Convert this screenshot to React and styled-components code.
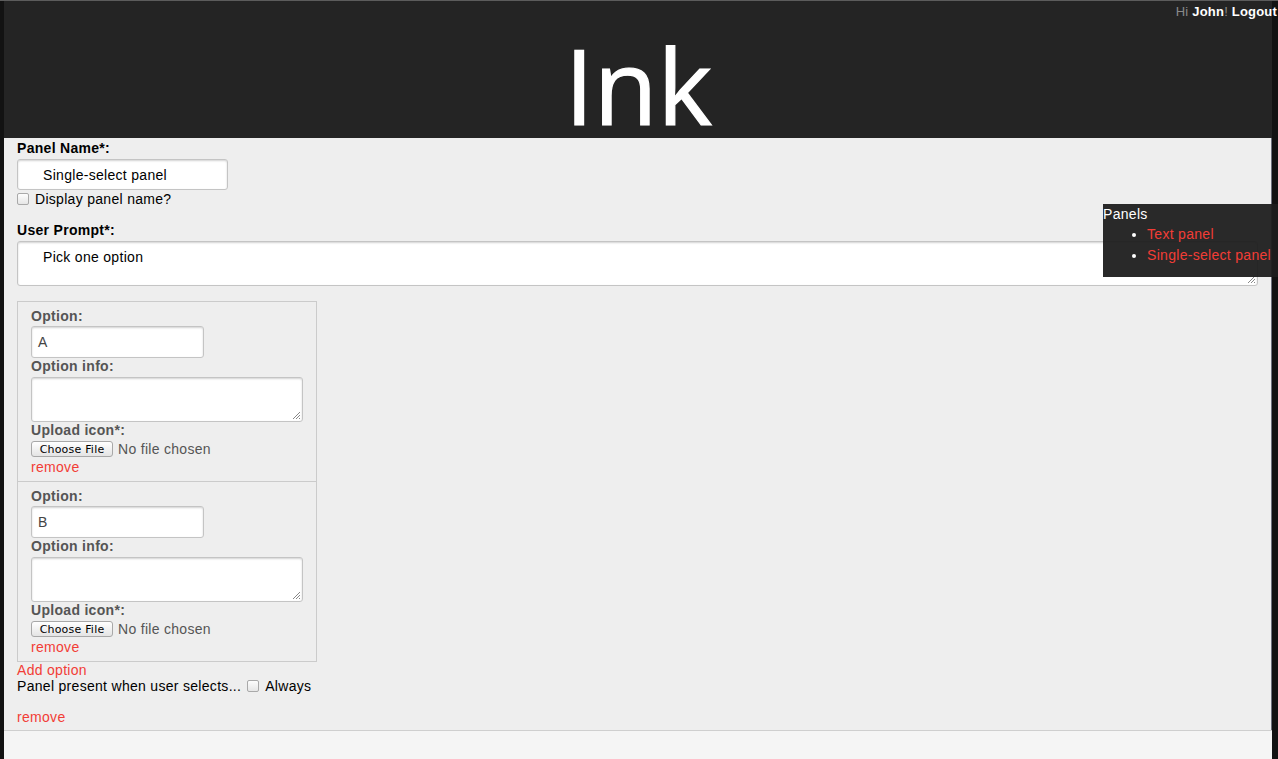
import React from 'react'
import styled, { createGlobalStyle } from 'styled-components'

const GlobalStyle = createGlobalStyle`
  html, body {
    margin: 0;
    padding: 0;
    background: #121212;
    font-family: "Liberation Sans", Arial, Helvetica, sans-serif;
    font-size: 14px;
    letter-spacing: 0.3px;
  }
  * { box-sizing: border-box; }
`

const Page = styled.div`
  position: relative;
  min-height: 759px;
  display: flex;
  flex-direction: column;
  border-top: 1px solid #5c5c5c;
  padding: 0 6px 0 4px;
  background: #121212;
`

const Header = styled.header`
  height: 137px;
  background: #242424;
  display: flex;
  justify-content: center;
  padding-top: 30px;
`

const Title = styled.h1`
  margin: 0 0 0 1px;
  font-family: "Open Sans", "DejaVu Sans", sans-serif;
  font-weight: 400;
  font-size: 104px;
  line-height: 107px;
  color: #fff;
  -webkit-text-stroke: 1.2px #fff;
  letter-spacing: 0px;
`

const UserBar = styled.div`
  position: absolute;
  top: 3px;
  right: 1px;
  font-size: 13px;
  font-weight: bold;
  color: #fff;
  line-height: 16px;
  letter-spacing: 0.2px;
`

const Muted = styled.span`
  color: #8a8a8a;
  font-weight: normal;
`

const Main = styled.main`
  background: #eee;
  padding: 2px 13px 5px;
  border-right: 1px solid #6c6f7b;
`

const Footer = styled.div`
  flex: 1;
  background: #f5f5f5;
  border-top: 1px solid #cfcfcf;
`

const Label = styled.div`
  font-weight: bold;
  font-size: 14px;
  line-height: 16px;
  color: ${p => p.$muted ? '#555' : '#000'};
  margin-top: ${p => p.$top || 0}px;
`

const TextInput = styled.div`
  width: ${p => p.$width}px;
  height: ${p => p.$height || 32}px;
  margin-top: ${p => p.$top || 0}px;
  padding: 0 0 0 ${p => p.$pad}px;
  display: flex;
  align-items: center;
  background: #fff;
  border: 1px solid #c4c4c4;
  border-radius: 3px;
  box-shadow: inset 0 1px 2px rgba(0,0,0,0.18);
  font-size: 14px;
  color: ${p => p.$muted ? '#444' : '#000'};
`

const Area = styled.div`
  position: relative;
  width: ${p => p.$width ? p.$width + 'px' : '100%'};
  height: 45px;
  margin-top: ${p => p.$top || 0}px;
  padding: 7px 0 0 ${p => p.$pad || 0}px;
  background: #fff;
  border: 1px solid #c4c4c4;
  border-radius: 3px;
  box-shadow: inset 0 1px 2px rgba(0,0,0,0.18);
  font-size: 14px;
  line-height: 16px;
  color: #000;
`

const Grip = styled.svg`
  position: absolute;
  right: 1px;
  bottom: 1px;
`

const CheckRow = styled.div`
  display: flex;
  align-items: center;
  gap: 6px;
  height: 16px;
  margin-top: ${p => p.$top || 0}px;
  line-height: 16px;
  color: #000;
`

const Box = styled.span`
  display: inline-block;
  width: 12px;
  height: 12px;
  border: 1px solid #a9a9a9;
  border-radius: 2px;
  background: linear-gradient(#fdfdfd, #e6e6e6);
`

const OptionCard = styled.div`
  width: 300px;
  padding: 6px 13px 6px;
  border: 1px solid #cbcbcb;
  margin-top: ${p => p.$first ? 15 : -1}px;
`

const FileRow = styled.div`
  display: flex;
  align-items: center;
  gap: 5px;
  height: 16px;
  margin-top: 3px;
  color: #555;
`

const FileButton = styled.span`
  display: inline-flex;
  align-items: center;
  justify-content: center;
  width: 82px;
  height: 16px;
  border: 1px solid #a8a8a8;
  border-radius: 3px;
  background: linear-gradient(#ffffff, #e4e4e4);
  font-family: "DejaVu Sans", "Liberation Sans", sans-serif;
  font-size: 11px;
  letter-spacing: 0.2px;
  color: #000;
`

const RedLink = styled.a`
  display: block;
  color: #f23d36;
  font-size: 14px;
  line-height: 16px;
  text-decoration: none;
  margin-top: ${p => p.$top || 0}px;
`

const PanelsMenu = styled.nav`
  position: absolute;
  top: 203px;
  right: 0;
  width: 175px;
  height: 73px;
  padding-top: 2px;
  background: rgba(30, 30, 30, 0.95);
  color: #fff;
  font-size: 14px;
  line-height: 16px;
`

const MenuList = styled.ul`
  margin: 2px 0 0;
  padding-left: 44px;
  color: #fff;

  li { line-height: 21px; }
  a { color: #f23d36; text-decoration: none; }
`

function GripIcon() {
  return (
    <Grip width="9" height="9" viewBox="0 0 9 9">
      <path d="M8 1L1 8M8 4L4 8M8 7L7 8" stroke="#888" strokeWidth="1" fill="none" />
    </Grip>
  )
}

function Option({ value, first }) {
  return (
    <OptionCard $first={first}>
      <Label $muted>Option:</Label>
      <TextInput $width={173} $top={2} $pad={6} $muted>{value}</TextInput>
      <Label $muted>Option info:</Label>
      <Area $width={272} $top={3}><GripIcon /></Area>
      <Label $muted>Upload icon*:</Label>
      <FileRow>
        <FileButton>Choose File</FileButton>
        <span>No file chosen</span>
      </FileRow>
      <RedLink $top={2} href="#">remove</RedLink>
    </OptionCard>
  )
}

export default function App() {
  return (
    <>
      <GlobalStyle />
      <Page>
        <Header>
          <Title>Ink</Title>
        </Header>
        <UserBar>
          <Muted>Hi </Muted>John<Muted>!</Muted> Logout
        </UserBar>
        <Main>
          <Label>Panel Name*:</Label>
          <TextInput $width={211} $height={31} $top={3} $pad={25}>Single-select panel</TextInput>
          <CheckRow $top={1}><Box />Display panel name?</CheckRow>

          <Label $top={15}>User Prompt*:</Label>
          <Area $top={3} $pad={25}>Pick one option<GripIcon /></Area>

          <Option value="A" first />
          <Option value="B" />

          <RedLink href="#">Add option</RedLink>
          <CheckRow>Panel present when user selects... <Box />Always</CheckRow>
          <RedLink $top={15} href="#">remove</RedLink>
        </Main>
        <Footer />
        <PanelsMenu>
          Panels
          <MenuList>
            <li><a href="#">Text panel</a></li>
            <li><a href="#">Single-select panel</a></li>
          </MenuList>
        </PanelsMenu>
      </Page>
    </>
  )
}
